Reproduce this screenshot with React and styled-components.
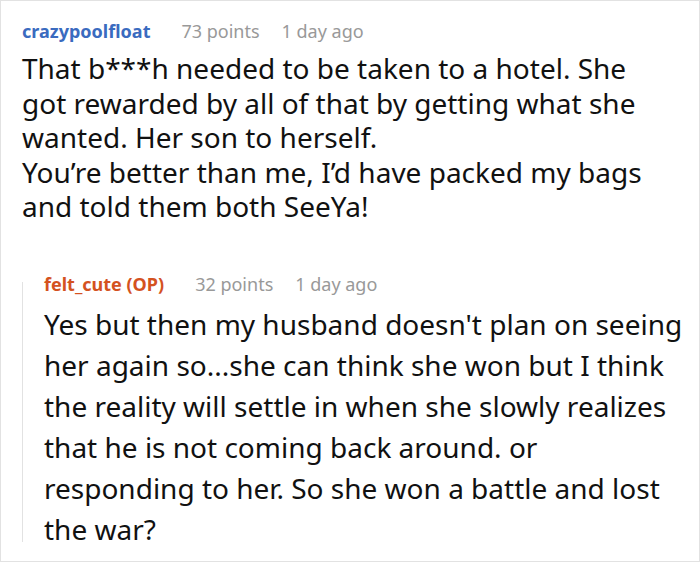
import React from "react";
import styled, { createGlobalStyle } from "styled-components";

const Global = createGlobalStyle`
  html, body { margin: 0; padding: 0; background: #fff; }
  body { font-family: "Noto Sans", "Open Sans", sans-serif; }
`;

const Page = styled.div`
  box-sizing: border-box;
  width: 700px;
  height: 562px;
  border: 1px solid #e2e2e2;
  padding: 16px 0 0 21px;
  overflow: hidden;
`;

const Comment = styled.div`
  display: flex;
  flex-direction: column;
`;

const Meta = styled.div`
  display: flex;
  align-items: baseline;
  gap: 22px;
  font-size: 18px;
  line-height: 28px;
  color: #999;
  white-space: nowrap;
`;

const Author = styled.span`
  font-weight: 700;
  color: ${(p) => (p.$op ? "#d4521f" : "#3a6bbf")};
  margin-right: 9px;
`;

const Body = styled.div`
  color: #111;
  font-size: 28px;
  line-height: ${(p) => p.$lh}px;
  margin-top: ${(p) => p.$mt}px;
  max-width: ${(p) => p.$max}px;
`;

const Reply = styled.div`
  position: relative;
  margin-top: 46px;
  padding-left: 22px;
  &::before {
    content: "";
    position: absolute;
    left: 0;
    top: 12px;
    height: 260px;
    width: 1px;
    background: #e2e2e2;
  }
`;

export default function App() {
  return (
    <>
      <Global />
      <Page>
        <Comment>
          <Meta>
            <Author>crazypoolfloat</Author>
            <span>73 points</span>
            <span>1 day ago</span>
          </Meta>
          <Body $lh={34.5} $mt={6} $max={640}>
            That b***h needed to be taken to a hotel. She got rewarded by all of that by getting what she wanted. Her son to herself.
            <br />
            You’re better than me, I’d have packed my bags and told them both SeeYa!
          </Body>
        </Comment>
        <Reply>
          <Comment>
            <Meta>
              <Author $op>felt_cute (OP)</Author>
              <span>32 points</span>
              <span>1 day ago</span>
            </Meta>
            <Body $lh={41} $mt={6} $max={642}>
              Yes but then my husband doesn't plan on seeing her again so...she can think she won but I think the reality will settle in when she slowly realizes that he is not coming back around. or responding to her. So she won a battle and lost the war?
            </Body>
          </Comment>
        </Reply>
      </Page>
    </>
  );
}
